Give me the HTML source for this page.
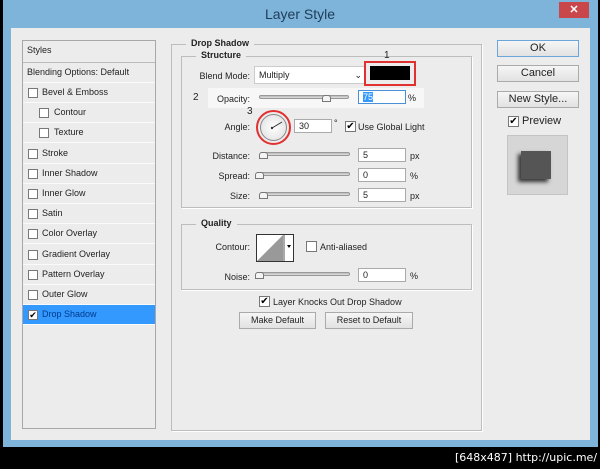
<!DOCTYPE html>
<html><head><style>
*{margin:0;padding:0;box-sizing:border-box}
body{width:600px;height:469px;background:#000;position:relative;overflow:hidden;font-family:"Liberation Sans",sans-serif;font-size:9px;color:#222}
.a{position:absolute}
.frame{left:3px;top:0;width:595px;height:447px;background:#7eb4d9}
.content{left:11px;top:28px;width:579px;height:412px;background:#ececec}
.title{left:0;width:600px;top:6px;text-align:center;font-size:14px;color:#1e3c5a}
.close{left:559px;top:2px;width:30px;height:16px;background:#c9474a;color:#fff;text-align:center;font-size:11px;line-height:16px;font-weight:bold}
.list{left:22px;top:40px;width:134px;height:389px;border:1px solid #a8a8a8;background:#ececec}
.row{position:absolute;left:0;width:132px;height:20px;border-bottom:1px solid #fafafa;line-height:19px;padding-left:19px}
.cb{position:absolute;width:10px;height:10px;border:1px solid #777;background:#fff;top:5px;left:5px}
.sel{background:#3399ff;color:#003a8c}
.box{border:1px solid #bdbdbd;box-shadow:1px 1px 0 #fff}
.lg{background:#ececec;font-weight:bold;padding:0 5px}
.inp{background:#fff;border:1px solid #aaa;height:14px;line-height:12px;padding-left:4px}
.sl{height:4px;border:1px solid #999;border-radius:2px;background:linear-gradient(#bbb,#ddd)}
.th{width:9px;height:7px;border:1px solid #777;background:#f4f4f4;border-radius:3px 3px 0 0}
.btn{border:1px solid #aaa;background:linear-gradient(#f6f6f6,#e2e2e2);text-align:center;line-height:15px}
.r{text-align:right}
</style></head><body>
<div class="a frame"></div>
<div class="a title">Layer Style</div>
<div class="a close">✕</div>
<div class="a content"></div>

<div class="a list">
 <div class="row" style="top:0;padding-left:4px;height:22px;border-bottom:1px solid #bbb">Styles</div>
 <div class="row" style="top:22px;padding-left:4px">Blending Options: Default</div>
 <div class="row" style="top:42px"><span class="cb"></span>Bevel &amp; Emboss</div>
 <div class="row" style="top:62px;padding-left:31px"><span class="cb" style="left:16px"></span>Contour</div>
 <div class="row" style="top:82px;padding-left:31px"><span class="cb" style="left:16px"></span>Texture</div>
 <div class="row" style="top:103px"><span class="cb"></span>Stroke</div>
 <div class="row" style="top:123px"><span class="cb"></span>Inner Shadow</div>
 <div class="row" style="top:143px"><span class="cb"></span>Inner Glow</div>
 <div class="row" style="top:163px"><span class="cb"></span>Satin</div>
 <div class="row" style="top:183px"><span class="cb"></span>Color Overlay</div>
 <div class="row" style="top:204px"><span class="cb"></span>Gradient Overlay</div>
 <div class="row" style="top:224px"><span class="cb"></span>Pattern Overlay</div>
 <div class="row" style="top:244px"><span class="cb"></span>Outer Glow</div>
 <div class="row sel" style="top:264px"><span class="cb" style="font-size:9px;line-height:8px;text-align:center;color:#000">✔</span>Drop Shadow</div>
</div>

<div class="a box" style="left:171px;top:44px;width:311px;height:387px"></div>
<div class="a lg" style="left:186px;top:38px">Drop Shadow</div>
<div class="a box" style="left:181px;top:56px;width:291px;height:152px"></div>
<div class="a lg" style="left:196px;top:50px">Structure</div>

<div class="a r" style="left:190px;top:71px;width:60px">Blend Mode:</div>
<div class="a inp" style="left:254px;top:66px;width:112px;height:18px;line-height:16px;border-color:#ccc">Multiply<span style="position:absolute;right:3px;top:0">⌄</span></div>
<div class="a" style="left:364px;top:61px;width:52px;height:25px;border:2px solid #e03030"></div>
<div class="a" style="left:370px;top:66px;width:40px;height:14px;background:#000"></div>
<div class="a" style="left:384px;top:50px;font-size:10px">1</div>

<div class="a" style="left:208px;top:88px;width:216px;height:20px;background:#f7f7f7"></div>
<div class="a" style="left:193px;top:92px;font-size:10px">2</div>
<div class="a r" style="left:200px;top:94px;width:50px">Opacity:</div>
<div class="a sl" style="left:259px;top:95px;width:90px"></div>
<div class="a th" style="left:322px;top:95px"></div>
<div class="a inp" style="left:358px;top:90px;width:48px;border-color:#4a90d9"><span style="background:#3399ff;color:#fff">75</span></div>
<div class="a" style="left:408px;top:93px">%</div>

<div class="a" style="left:247px;top:106px;font-size:10px">3</div>
<div class="a r" style="left:200px;top:122px;width:50px">Angle:</div>
<div class="a" style="left:256px;top:110px;width:35px;height:35px;border:2px solid #e03030;border-radius:50%"></div>
<div class="a" style="left:260px;top:114px;width:27px;height:27px;border:1px solid #888;border-radius:50%;background:radial-gradient(#fff,#ddd)"></div>
<svg class="a" style="left:260px;top:114px" width="27" height="27"><line x1="12" y1="14" x2="22" y2="8" stroke="#333" stroke-width="1"/><circle cx="12" cy="14" r="1.2" fill="#333"/></svg>
<div class="a inp" style="left:294px;top:119px;width:38px">30</div>
<div class="a" style="left:334px;top:118px">°</div>
<div class="a cb" style="left:345px;top:121px;width:11px;height:11px;font-size:10px;line-height:9px;text-align:center;color:#000">✔</div>
<div class="a" style="left:358px;top:122px">Use Global Light</div>

<div class="a r" style="left:200px;top:151px;width:50px">Distance:</div>
<div class="a sl" style="left:260px;top:152px;width:90px"></div>
<div class="a th" style="left:259px;top:152px"></div>
<div class="a inp" style="left:358px;top:148px;width:48px">5</div>
<div class="a" style="left:410px;top:151px">px</div>

<div class="a r" style="left:200px;top:171px;width:50px">Spread:</div>
<div class="a sl" style="left:256px;top:172px;width:94px"></div>
<div class="a th" style="left:255px;top:172px"></div>
<div class="a inp" style="left:358px;top:168px;width:48px">0</div>
<div class="a" style="left:410px;top:171px">%</div>

<div class="a r" style="left:200px;top:191px;width:50px">Size:</div>
<div class="a sl" style="left:260px;top:192px;width:90px"></div>
<div class="a th" style="left:259px;top:192px"></div>
<div class="a inp" style="left:358px;top:188px;width:48px">5</div>
<div class="a" style="left:410px;top:191px">px</div>

<div class="a box" style="left:181px;top:224px;width:291px;height:66px"></div>
<div class="a lg" style="left:196px;top:218px">Quality</div>
<div class="a r" style="left:200px;top:242px;width:50px">Contour:</div>
<div class="a" style="left:256px;top:234px;width:38px;height:28px;border:1px solid #333;background:#fff"></div>
<svg class="a" style="left:257px;top:235px" width="36" height="26"><polygon points="0,26 26,0 26,26" fill="#999"/><line x1="27" y1="0" x2="27" y2="26" stroke="#555"/><polygon points="30,10 34,10 32,13" fill="#000"/></svg>
<div class="a cb" style="left:306px;top:241px;width:11px;height:11px"></div>
<div class="a" style="left:320px;top:242px">Anti-aliased</div>
<div class="a r" style="left:200px;top:272px;width:50px">Noise:</div>
<div class="a sl" style="left:256px;top:272px;width:94px"></div>
<div class="a th" style="left:255px;top:272px"></div>
<div class="a inp" style="left:358px;top:268px;width:48px">0</div>
<div class="a" style="left:410px;top:271px">%</div>

<div class="a cb" style="left:259px;top:296px;width:11px;height:11px;font-size:10px;line-height:9px;text-align:center;color:#000">✔</div>
<div class="a" style="left:273px;top:297px">Layer Knocks Out Drop Shadow</div>
<div class="a btn" style="left:239px;top:312px;width:77px;height:17px">Make Default</div>
<div class="a btn" style="left:325px;top:312px;width:88px;height:17px">Reset to Default</div>

<div class="a btn" style="left:497px;top:40px;width:82px;height:17px;border-color:#6aa6dc;font-size:11px">OK</div>
<div class="a btn" style="left:497px;top:65px;width:82px;height:17px;font-size:11px">Cancel</div>
<div class="a btn" style="left:497px;top:91px;width:82px;height:17px;font-size:11px">New Style...</div>
<div class="a cb" style="left:508px;top:116px;width:11px;height:11px;font-size:10px;line-height:9px;text-align:center;color:#000">✔</div>
<div class="a" style="left:522px;top:115px;font-size:11px">Preview</div>
<div class="a" style="left:507px;top:135px;width:61px;height:60px;background:#d6d6d6;border:1px solid #c4c4c4"></div>
<div class="a" style="left:521px;top:151px;width:30px;height:28px;background:#555;box-shadow:-3px 3px 4px #333"></div>

<div class="a" style="left:455px;top:451px;color:#fff;font-size:11px;font-family:'DejaVu Sans',sans-serif">[648x487] http://upic.me/</div>
</body></html>
